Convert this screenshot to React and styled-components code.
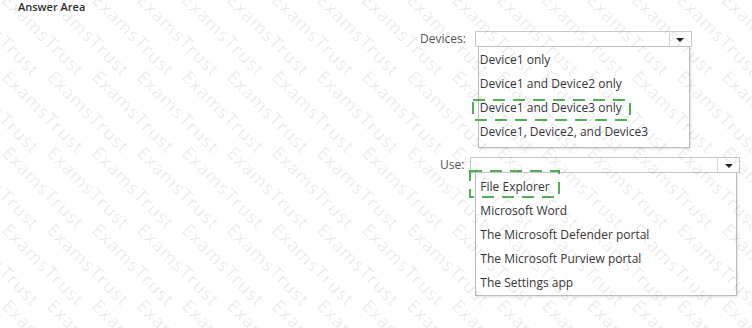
import React from 'react'
import styled, { createGlobalStyle } from 'styled-components'

const GlobalStyle = createGlobalStyle`
    html, body {
        margin: 0;
        padding: 0;
        background: #ffffff;
    }
    body {
        font-family: 'Open Sans', 'Noto Sans', sans-serif;
        color: #3a3a3a;
    }
`

const Page = styled.div`
    position: relative;
    width: 752px;
    height: 328px;
    overflow: hidden;
    background: #fff;
`

const Title = styled.h3`
    margin: 0;
    padding: 0 0 0 18px;
    height: 16px;
    line-height: 14px;
    font-size: 11px;
    font-weight: 600;
    color: #2f2f2f;
`

const Questions = styled.div`
    display: flex;
    flex-direction: column;
    padding-top: 15px;
`

const QuestionRow = styled.div`
    display: flex;
    align-items: flex-start;
    gap: ${({gap}) => gap}px;
    margin-left: ${({indent}) => indent}px;
    margin-top: ${({top}) => top || 0}px;
`

const Label = styled.span`
    font-size: 12px;
    line-height: 16px;
    color: #555;
`

const Dropdown = styled.div`
    display: flex;
    flex-direction: column;
    width: ${({width}) => width}px;
`

const SelectBox = styled.div`
    display: flex;
    height: 14px;
    border: 1px solid #c9c9c9;
    background: #fff;
`

const SelectValue = styled.div`
    flex: 1;
`

const ArrowButton = styled.div`
    width: 21px;
    display: flex;
    align-items: center;
    justify-content: center;
    border-left: 1px solid #d6d6d6;

    &::after {
        content: '';
        margin-top: 1px;
        border-left: 4px solid transparent;
        border-right: 4px solid transparent;
        border-top: 4px solid #222;
    }
`

const List = styled.ul`
    list-style: none;
    margin: 0 ${({insetRight}) => insetRight}px 0 ${({insetLeft}) => insetLeft}px;
    padding: ${({padTop}) => padTop}px 0 ${({padBottom}) => padBottom}px;
    border: 1px solid #bdbdbd;
    border-top: none;
    background: #fff;
    box-shadow: 1px 1px 2px rgba(0, 0, 0, 0.12);
`

const Item = styled.li`
    position: relative;
    height: 24px;
    line-height: 24px;
    padding-left: ${({indent}) => indent}px;
    font-size: 12px;
    color: #363636;
    white-space: nowrap;
`

const Mark = styled.svg`
    position: absolute;
    left: ${({box}) => box.x}px;
    top: ${({box}) => box.y}px;
    overflow: visible;
    pointer-events: none;
`

const Watermark = styled.div`
    position: absolute;
    inset: 0;
    pointer-events: none;
`

const Stamp = styled.span`
    position: absolute;
    transform-origin: 0 0;
    transform: rotate(45deg);
    font-family: 'Open Sans', sans-serif;
    font-size: 18px;
    letter-spacing: 1px;
    line-height: 18px;
    color: rgba(0, 0, 0, 0.09);
    white-space: nowrap;
`

const DashedMark = ({box}) => (
    <Mark box={box} width={box.w} height={box.h}>
        <rect
            x='1'
            y='1'
            width={box.w - 2}
            height={box.h - 2}
            fill='none'
            stroke='#52b052'
            strokeWidth='2'
            strokeDasharray='12 8'
        />
    </Mark>
)

const questions = [
    {
        label: 'Devices:',
        indent: 420,
        gap: 9,
        top: 0,
        width: 217,
        list: { insetLeft: 3, insetRight: 2, padTop: 1, padBottom: 3, itemIndent: 1 },
        options: ['Device1 only', 'Device1 and Device2 only', 'Device1 and Device3 only', 'Device1, Device2, and Device3'],
        answer: 2,
        mark: { x: -7, y: 3, w: 159, h: 22 },
    },
    {
        label: 'Use:',
        indent: 440,
        gap: 6,
        top: 9,
        width: 270,
        list: { insetLeft: 5, insetRight: 3, padTop: 2, padBottom: 0, itemIndent: 4 },
        options: ['File Explorer', 'Microsoft Word', 'The Microsoft Defender portal', 'The Microsoft Purview portal', 'The Settings app'],
        answer: 0,
        mark: { x: -7, y: -5, w: 91, h: 28 },
    },
]

const stamps = []
for (let r = 0; r < 5; r++) {
    for (let c = -1; c < 17; c++) {
        stamps.push({ key: `${r}-${c}`, x: 12 + c * 45, y: -10 + r * 76.5 })
    }
}

const App = () => (
    <Page>
        <GlobalStyle />
        <Title>Answer Area</Title>
        <Questions>
            {questions.map(q => (
                <QuestionRow key={q.label} indent={q.indent} gap={q.gap} top={q.top}>
                    <Label>{q.label}</Label>
                    <Dropdown width={q.width}>
                        <SelectBox>
                            <SelectValue />
                            <ArrowButton />
                        </SelectBox>
                        <List
                            insetLeft={q.list.insetLeft}
                            insetRight={q.list.insetRight}
                            padTop={q.list.padTop}
                            padBottom={q.list.padBottom}
                        >
                            {q.options.map((opt, i) => (
                                <Item key={opt} indent={q.list.itemIndent}>
                                    {opt}
                                    {i === q.answer && <DashedMark box={q.mark} />}
                                </Item>
                            ))}
                        </List>
                    </Dropdown>
                </QuestionRow>
            ))}
        </Questions>
        <Watermark>
            {stamps.map(s => (
                <Stamp key={s.key} style={{ left: s.x, top: s.y }}>ExamsTrust</Stamp>
            ))}
        </Watermark>
    </Page>
)

export default App
